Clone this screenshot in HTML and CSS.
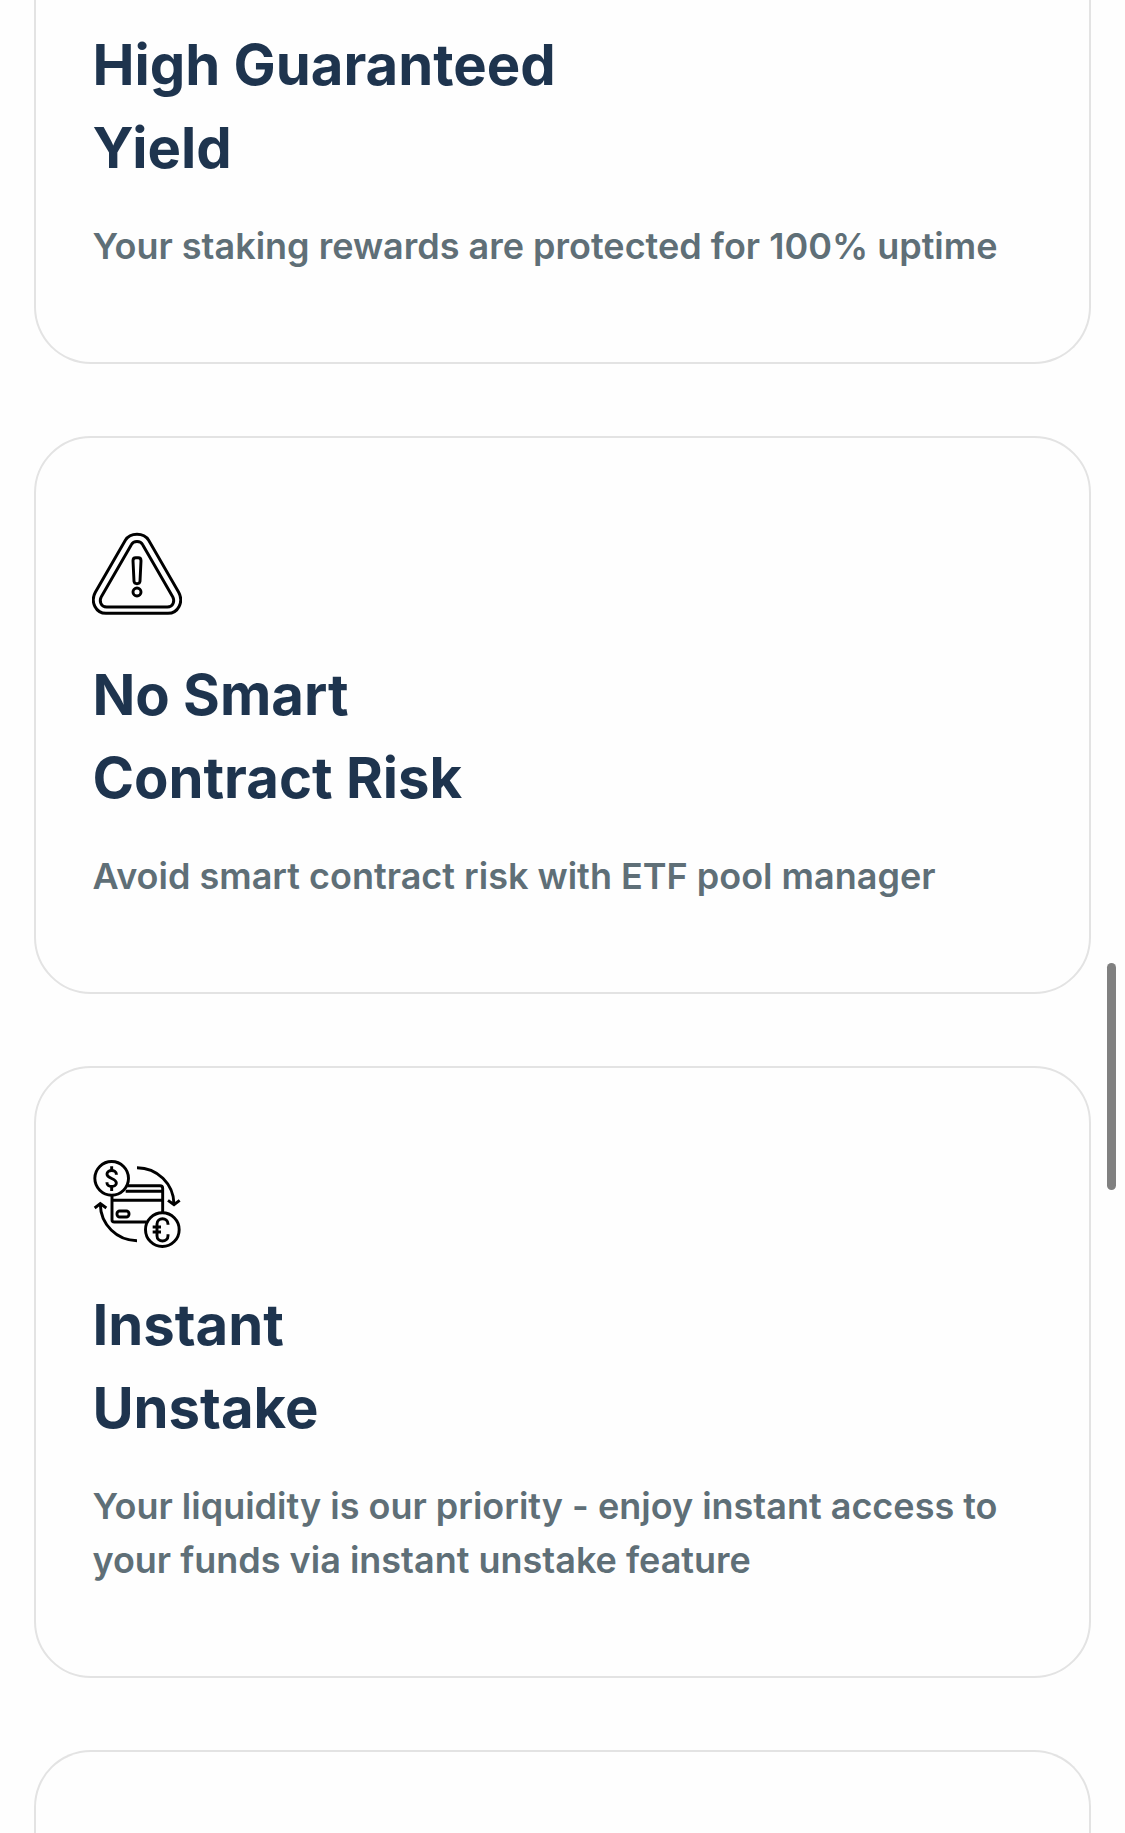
FILE: index.html
```html
<!DOCTYPE html>
<html lang="en">
<head>
    <meta charset="UTF-8">
    <meta name="viewport" content="width=device-width, initial-scale=1.0">
    <title>Staking Features</title>
    <link rel="stylesheet" href="styles.css">
</head>
<body>
    <main class="features">
        <section class="card card-first">
            <h2>High Guaranteed<br>Yield</h2>
            <p>Your staking rewards are protected for 100% uptime</p>
        </section>

        <section class="card">
            <svg class="icon" viewBox="36 27 270 270" aria-hidden="true">
                <path d="M136 61C151 37 191 37 206 61L296 217C312 246 294 280 264 280H78C48 280 30 246 46 217Z"/>
                <path d="M154 74C161 61 181 61 188 74L278 230C285 243 280 261 262 261H80C62 261 57 243 64 230Z"/>
                <path d="M159 122Q159 113 167 113H175Q183 113 183 122L180 184Q179 191 171 191Q163 191 162 184Z"/>
                <circle cx="171" cy="216" r="12"/>
            </svg>
            <h2>No Smart<br>Contract Risk</h2>
            <p>Avoid smart contract risk with ETF pool manager</p>
        </section>

        <section class="card">
            <svg class="icon" viewBox="36 26 270 270" aria-hidden="true">
                <!-- card -->
                <path d="M142 106H240Q248 106 248 114V186M96 136V208Q96 215 103 215H199M137 123H248M96 150H248"/>
                <rect x="111" y="182" width="36" height="18" rx="8"/>
                <!-- coins -->
                <circle cx="95" cy="84" r="50.5"/>
                <circle cx="247" cy="238" r="50.5"/>
                <path d="M95 48V60M95 108V122M109 73V71C109 57 81 57 81 71C81 86 109 83 109 98C109 112 81 112 81 98V96"/>
                <path d="M264 223V221C264 200 231 200 231 221V256C231 277 264 277 264 256V252M218 230H243M218 245H243"/>
                <!-- arrows -->
                <path d="M171 52A111 111 0 0 1 282 161M264 150L282 163L299 150"/>
                <path d="M171 271A110 110 0 0 1 61 162M44 173L61 160L79 173"/>
            </svg>
            <h2>Instant<br>Unstake</h2>
            <p>Your liquidity is our priority - enjoy instant access to your funds via instant unstake feature</p>
        </section>

        <section class="card card-last"></section>
    </main>
    <div class="scroll-thumb"></div>
</body>
</html>
```
FILE: styles.css
```css
* {
    box-sizing: border-box;
}

body {
    margin: 0;
    background: #fefefe;
    font-family: Inter, sans-serif;
}

.features {
    display: flex;
    flex-direction: column;
    gap: 72px;
    height: 1833px;
    padding: 0 34px;
}

/* Feature cards */
.card {
    flex-shrink: 0;
    padding: 91px 56px 89px 56.4px;
    border: 2px solid #e3e3e3;
    border-radius: 57px;
}

.card-first {
    padding-top: 24px;
    border-top: 0;
    border-radius: 0 0 57px 57px;
}

.card-last {
    flex: 1;
    padding: 0;
    border-bottom: 0;
    border-radius: 57px 57px 0 0;
}

.card h2 {
    margin: 0 0 29px;
    color: #1e344e;
    font-size: 56.25px;
    font-weight: 700;
    line-height: 83px;
}

.card p {
    margin: 0;
    color: #5f6f77;
    font-size: 36px;
    font-weight: 600;
    line-height: 54px;
}

.icon {
    display: block;
    width: 90px;
    height: 90px;
    margin-bottom: 35px;
    fill: none;
    stroke: #000;
    stroke-width: 8.8;
}

/* Scroll indicator */
.scroll-thumb {
    position: absolute;
    top: 963px;
    right: 9px;
    width: 9px;
    height: 227px;
    border-radius: 5px;
    background: #808080;
}
```
